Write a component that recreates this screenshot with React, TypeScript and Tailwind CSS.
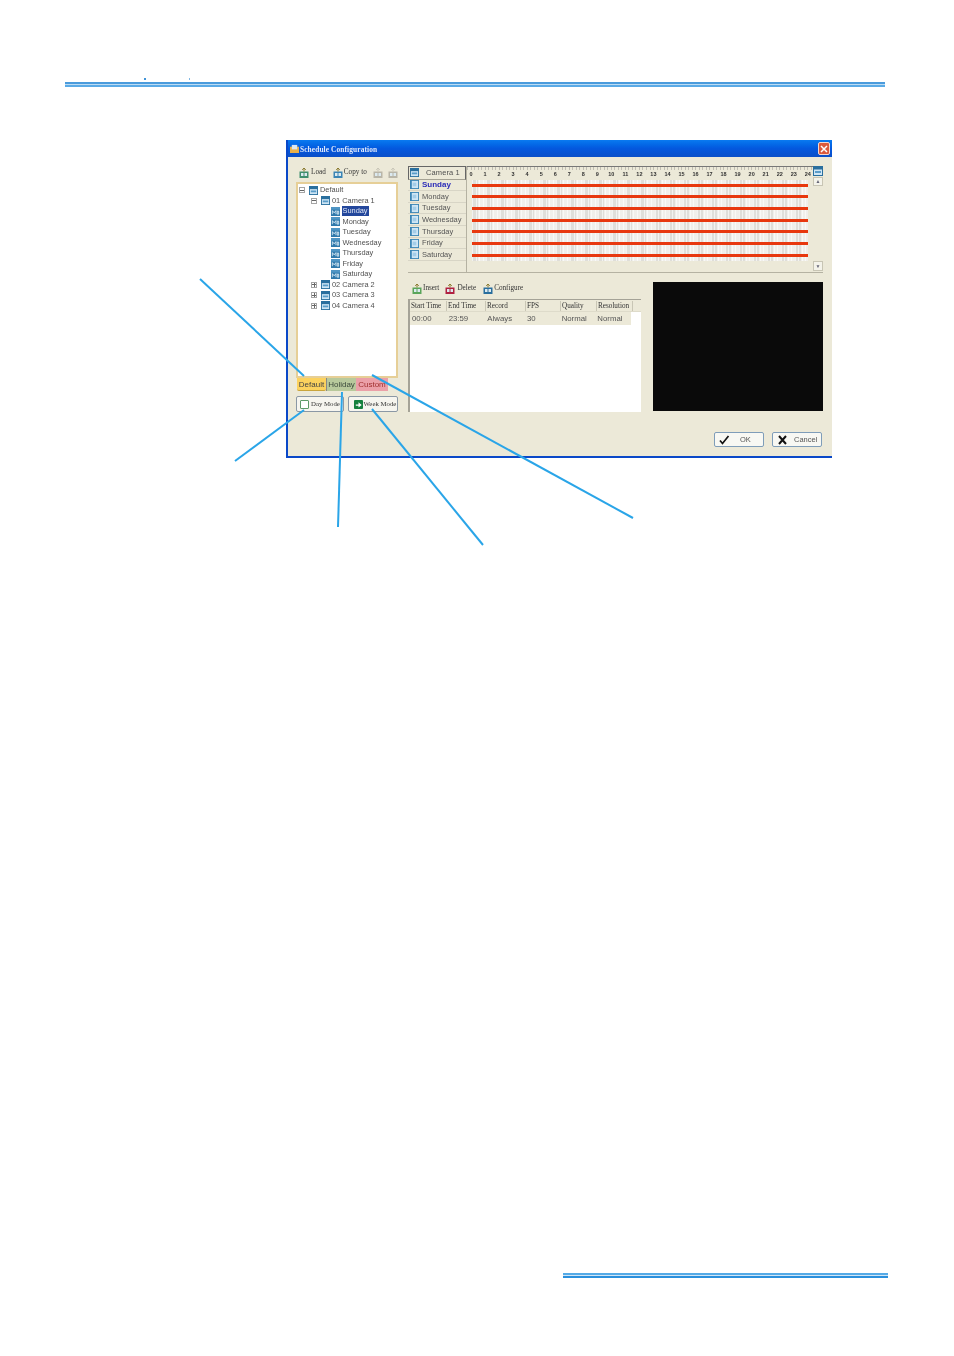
const days = ["Sunday", "Monday", "Tuesday", "Wednesday", "Thursday", "Friday", "Saturday"];
const hours = Array.from({ length: 25 }, (_, i) => i);
const columns = [
  { title: "Start Time", value: "00:00", w: "w-[37px]" },
  { title: "End Time", value: "23:59", w: "w-[39px]" },
  { title: "Record", value: "Always", w: "w-[40px]" },
  { title: "FPS", value: "30", w: "w-[35px]" },
  { title: "Quality", value: "Normal", w: "w-[36px]" },
  { title: "Resolution", value: "Normal", w: "w-[36px]" },
];

function Stripe({ className }: { className: string }) {
  return <div className={className} />;
}

function Calendar({ size = 9 }: { size?: number }) {
  return (
    <svg width={size} height={size} viewBox="0 0 10 10" className="shrink-0">
      <rect width="10" height="10" fill="#2a6f9e" />
      <rect x="1" y="3.5" width="8" height="5.5" fill="#cfe6f5" />
      <rect x="2" y="5" width="6" height="2" fill="#5a9cc8" />
    </svg>
  );
}

function TreeDayIcon() {
  return (
    <svg width="9" height="9" viewBox="0 0 10 10" className="shrink-0">
      <rect width="10" height="10" fill="#2f78ab" />
      <rect y="0" width="10" height="3" fill="#4f95c4" />
      <path d="M1.5 8V4l2 2.5 2-2.5v4M7 4.5h1.5V8H7z" fill="none" stroke="#e3f1fa" strokeWidth="0.9" />
    </svg>
  );
}

function DayIcon() {
  return (
    <svg width="9" height="9" viewBox="0 0 10 10" className="shrink-0">
      <rect width="10" height="10" fill="#3b85b5" />
      <rect x="2" y="1" width="7" height="8" fill="#cfe6f5" />
      <rect x="3" y="3" width="4" height="4" fill="#a3cde8" />
    </svg>
  );
}

function Expander({ sign }: { sign: "+" | "-" }) {
  return (
    <div className="relative flex h-[6px] w-[6px] shrink-0 items-center justify-center border border-[#a5a5a5] bg-white">
      <div className="h-px w-[4px] bg-[#666]" />
      {sign === "+" && <div className="absolute h-[4px] w-px bg-[#666]" />}
    </div>
  );
}

function ToolIcon({ kind }: { kind: "load" | "copy" | "ghost" | "insert" | "delete" | "config" }) {
  const main = { load: "#3f8f6e", copy: "#3b85b5", ghost: "#b9b6a8", insert: "#5aa55a", delete: "#b02040", config: "#2a6f9e" }[kind];
  return (
    <svg width="10" height="10" viewBox="0 0 10 10" className="shrink-0">
      <rect x="0.5" y="3.5" width="9" height="6.5" fill={main} />
      <rect x="2" y="5" width="2.5" height="3" fill="#dceaf0" />
      <rect x="5.5" y="5" width="2.5" height="3" fill="#dceaf0" />
      <path d="M5 0v3.5M3.2 1.8L5 0l1.8 1.8" fill="none" stroke={kind === "ghost" ? "#c9c6b8" : "#8a7a30"} strokeWidth="1" />
    </svg>
  );
}

function TreeRow({ pad, label, selected, icon, sign }: { pad: string; label: string; selected?: boolean; icon: "cal" | "day"; sign?: "+" | "-" }) {
  return (
    <div className={`flex h-[10.5px] items-center ${pad}`}>
      {sign && <Expander sign={sign} />}
      <div className={sign ? "ml-[3.5px]" : ""}>{icon === "cal" ? <Calendar /> : <TreeDayIcon />}</div>
      <span className={`ml-[1.5px] whitespace-nowrap px-px text-[7.4px] leading-[10px] ${selected ? "bg-[#23479c] text-[#dfe6f5]" : "text-[#505050]"}`}>{label}</span>
    </div>
  );
}

function ModeButton({ label, width, icon }: { label: string; width: string; icon: "blank" | "arrow" }) {
  return (
    <div className={`flex h-[16px] ${width} items-center rounded-[2px] border border-[#8b98a5] bg-[#f6f5ef] ${icon === "blank" ? "pl-[3px]" : "pl-[5px]"}`}>
      {icon === "blank" ? (
        <div className="h-[9px] w-[9px] shrink-0 rounded-[1px] border border-[#5d9a68] bg-white" />
      ) : (
        <svg width="9" height="9" viewBox="0 0 10 10" className="shrink-0">
          <rect width="10" height="10" rx="1" fill="#15803d" />
          <path d="M2 5h3V2.5L8.5 5.5 5 8.2V6.5H2z" fill="#fff" />
        </svg>
      )}
      <span className={`${icon === "blank" ? "ml-[2px]" : "ml-[0.5px]"} whitespace-nowrap font-['Liberation_Serif',serif] text-[6.8px] leading-none text-[#333]`}>{label}</span>
    </div>
  );
}

function DialogButton({ label, icon }: { label: string; icon: "ok" | "cancel" }) {
  return (
    <div className="flex h-[15px] w-[50px] items-center rounded-[2px] border border-[#7f9db9] bg-[#f8f8f3] pl-[4px]">
      {icon === "ok" ? (
        <svg width="11" height="10" viewBox="0 0 11 10"><path d="M1 5.5l2.5 3L9.5 1" fill="none" stroke="#111" strokeWidth="1.7" /></svg>
      ) : (
        <svg width="11" height="10" viewBox="0 0 11 10"><path d="M2 1l7 8M9 1L2 9" fill="none" stroke="#111" strokeWidth="2" /></svg>
      )}
      <span className={`${icon === "ok" ? "ml-[10px]" : "ml-[6px]"} text-[7.5px] leading-none text-[#555]`}>{label}</span>
    </div>
  );
}

export default function App() {
  return (
    <div className="relative h-[1356px] w-[954px] overflow-hidden bg-white pt-[78px] font-['Liberation_Sans',sans-serif]">
      <div className="flex h-[4px] items-start pl-[144px]">
        <Stripe className="h-[2px] w-[2px] bg-[#3f94d8]" />
        <Stripe className="ml-[43px] h-[2px] w-px bg-[#7fb7e4]" />
      </div>
      <div className="ml-[65px] h-[5px] w-[820px] border-y-2 border-t-[#4a9bdc] border-b-[#5aaae6] bg-[#bcdcf4]" />

      <div className="ml-[286px] mt-[53px] h-[318px] w-[546px] overflow-hidden border-b-2 border-l-2 border-[#0a48c8] bg-[#ece9d8] blur-[0.35px]">
        <div className="flex h-[17px] items-center bg-gradient-to-b from-[#0a7af0] via-[#0458de] to-[#0a4fc8] pl-[2px] pr-[2px]">
          <svg width="9" height="9" viewBox="0 0 10 10"><rect y="3" width="10" height="7" fill="#e8b04a" /><rect x="2" y="1" width="6" height="5" fill="#dce8f0" /></svg>
          <span className="ml-px mt-[2px] font-['Liberation_Serif',serif] text-[7.4px] font-bold leading-none tracking-[0.1px] text-[#dfe9fb]">Schedule Configuration</span>
          <div className="ml-auto flex h-[13px] w-[12px] items-center justify-center rounded-[2px] border border-[#f3d8d0] bg-[#dc5a3c]">
            <svg width="8" height="8" viewBox="0 0 8 8"><path d="M1 1l6 6M7 1L1 7" stroke="#fff" strokeWidth="1.5" /></svg>
          </div>
        </div>

        <div className="flex gap-[10px] pl-[8px] pr-[9px] pt-[9px]">
          <div className="w-[102px] pt-px">
            <div className="flex h-[11px] items-center pl-[3px] font-['Liberation_Serif',serif] text-[7.2px] text-[#333]">
              <ToolIcon kind="load" />
              <span className="ml-[2px]">Load</span>
              <div className="ml-[7px]"><ToolIcon kind="copy" /></div>
              <span className="ml-px whitespace-nowrap">Copy to</span>
              <div className="ml-[6px]"><ToolIcon kind="ghost" /></div>
              <div className="ml-[5px]"><ToolIcon kind="ghost" /></div>
            </div>
            <div className="mt-[4px] h-[196px] border-2 border-[#e6cf97] bg-white pl-px pt-[1px]">
              <TreeRow pad="pl-0" label="Default" icon="cal" sign="-" />
              <TreeRow pad="pl-[12px]" label="01 Camera 1" icon="cal" sign="-" />
              {days.map((d) => (
                <TreeRow key={d} pad="pl-[32px]" label={d} icon="day" selected={d === "Sunday"} />
              ))}
              <TreeRow pad="pl-[12px]" label="02 Camera 2" icon="cal" sign="+" />
              <TreeRow pad="pl-[12px]" label="03 Camera 3" icon="cal" sign="+" />
              <TreeRow pad="pl-[12px]" label="04 Camera 4" icon="cal" sign="+" />
            </div>
            <div className="flex h-[13px] pl-px text-[8px] leading-[13px]">
              <div className="w-[29px] rounded-b-[2px] border-b border-[#c9a53c] bg-[#fcd25e] text-center text-[#444]">Default</div>
              <div className="w-[30px] border-l border-[#888] bg-[#b8c99c] text-center text-[#3c4a3c]">Holiday</div>
              <div className="w-[32px] bg-[#eba0a8] text-center text-[#a03030]">Custom</div>
            </div>
            <div className="mt-[5px] flex justify-between">
              <ModeButton label="Day Mode" width="w-[48px]" icon="blank" />
              <ModeButton label="Week Mode" width="w-[50px]" icon="arrow" />
            </div>
          </div>

          <div className="w-[415px]">
            <div className="flex h-[107px] border-b border-[#b5b2a2]">
              <div className="w-[59px] shrink-0 border-r border-[#b5b2a2]">
                <div className="flex h-[13.5px] items-center border border-[#666] border-b-[#a5a294] pl-[1px]">
                  <Calendar />
                  <span className="ml-[7px] text-[7.5px] tracking-[0.1px] text-[#505050]">Camera 1</span>
                </div>
                {days.map((d) => (
                  <div key={d} className="flex h-[11.67px] items-center border-b border-[#d8d5c6] pl-[2px]">
                    <DayIcon />
                    <span className={`ml-[3px] text-[7.5px] leading-none ${d === "Sunday" ? "text-[8px] font-bold text-[#2c2cb8]" : "text-[#555]"}`}>{d}</span>
                  </div>
                ))}
              </div>
              <div className="w-[346px] shrink-0">
                <div className="flex h-[13.5px] flex-col border-t border-[#777] bg-[#ece9d8]">
                  <div className="h-[3px] bg-[repeating-linear-gradient(90deg,#c0beb2_0_1px,transparent_1px_3.51px)]" />
                  <div className="-ml-[3px] grid grid-cols-[repeat(25,14.04px)] text-center text-[5.5px] font-bold leading-[8px] text-[#333]">
                    {hours.map((h) => (
                      <span key={h}>{h}</span>
                    ))}
                  </div>
                </div>
                <div className="ml-[5px] w-[336px] bg-[repeating-linear-gradient(90deg,#ffffff99_0_1px,transparent_1px_3.51px),repeating-linear-gradient(90deg,#dfded9_0_6px,#f0efeb_6px_14.04px)]">
                  {days.map((d) => (
                    <div key={d} className="flex h-[11.67px] items-center">
                      <div className="h-[3px] w-full bg-[#e8380f]" />
                    </div>
                  ))}
                </div>
              </div>
              <div className="flex w-[10px] shrink-0 flex-col justify-between pb-px">
                <div>
                  <Calendar size={10} />
                  <div className="mt-[1px] flex h-[9px] items-center justify-center border border-[#c8c5b4] bg-[#f4f3ea] text-[5px] leading-none text-[#667]">▲</div>
                </div>
                <div className="flex h-[10px] items-center justify-center border border-[#c8c5b4] bg-[#f4f3ea] text-[5px] leading-none text-[#667]">▼</div>
              </div>
            </div>

            <div className="mt-[9px] flex justify-between">
              <div className="w-[233px] pt-px">
                <div className="flex h-[11px] items-center pl-[4px] font-['Liberation_Serif',serif] text-[7.2px] text-[#333]">
                  <ToolIcon kind="insert" />
                  <span className="ml-px">Insert</span>
                  <div className="ml-[6px]"><ToolIcon kind="delete" /></div>
                  <span className="ml-[2px]">Delete</span>
                  <div className="ml-[7px]"><ToolIcon kind="config" /></div>
                  <span className="ml-px">Configure</span>
                </div>
                <div className="mt-[5px] h-[113px] border-l-2 border-t border-[#a5a397] bg-white">
                  <div className="flex h-[12px] items-center border-b border-[#dedbca] bg-[#ece9d8] font-['Liberation_Serif',serif] text-[7.2px] text-[#333]">
                    {columns.map((c) => (
                      <div key={c.title} className={`${c.w} whitespace-nowrap border-r border-[#c9c6b5] pl-[1px] leading-[10px]`}>{c.title}</div>
                    ))}
                  </div>
                  <div className="flex h-[13px] w-[221px] items-center bg-[#ece9d8] text-[7.8px] text-[#555]">
                    {columns.map((c) => (
                      <div key={c.title} className={`${c.w} whitespace-nowrap pl-[2px]`}>{c.value}</div>
                    ))}
                  </div>
                </div>
              </div>
              <div className="h-[129px] w-[170px] bg-[#0a0a0a]" />
            </div>

            <div className="mt-[20px] flex justify-end gap-[8px] pr-px">
              <DialogButton label="OK" icon="ok" />
              <DialogButton label="Cancel" icon="cancel" />
            </div>
          </div>
        </div>
      </div>

      <div className="ml-[563px] mt-[815px] h-[5px] w-[325px] border-y-2 border-t-[#55aae6] border-b-[#2b8fdc] bg-[#cfe6f7]" />

      <svg className="absolute left-0 top-0" width="954" height="1356" fill="none" stroke="#2aa5e8" strokeWidth="2">
        <path d="M200 279L304 376" />
        <path d="M235 461L304 410" />
        <path d="M338 527L342 392" />
        <path d="M483 545L372 409" />
        <path d="M633 518L372 375" />
      </svg>
    </div>
  );
}
